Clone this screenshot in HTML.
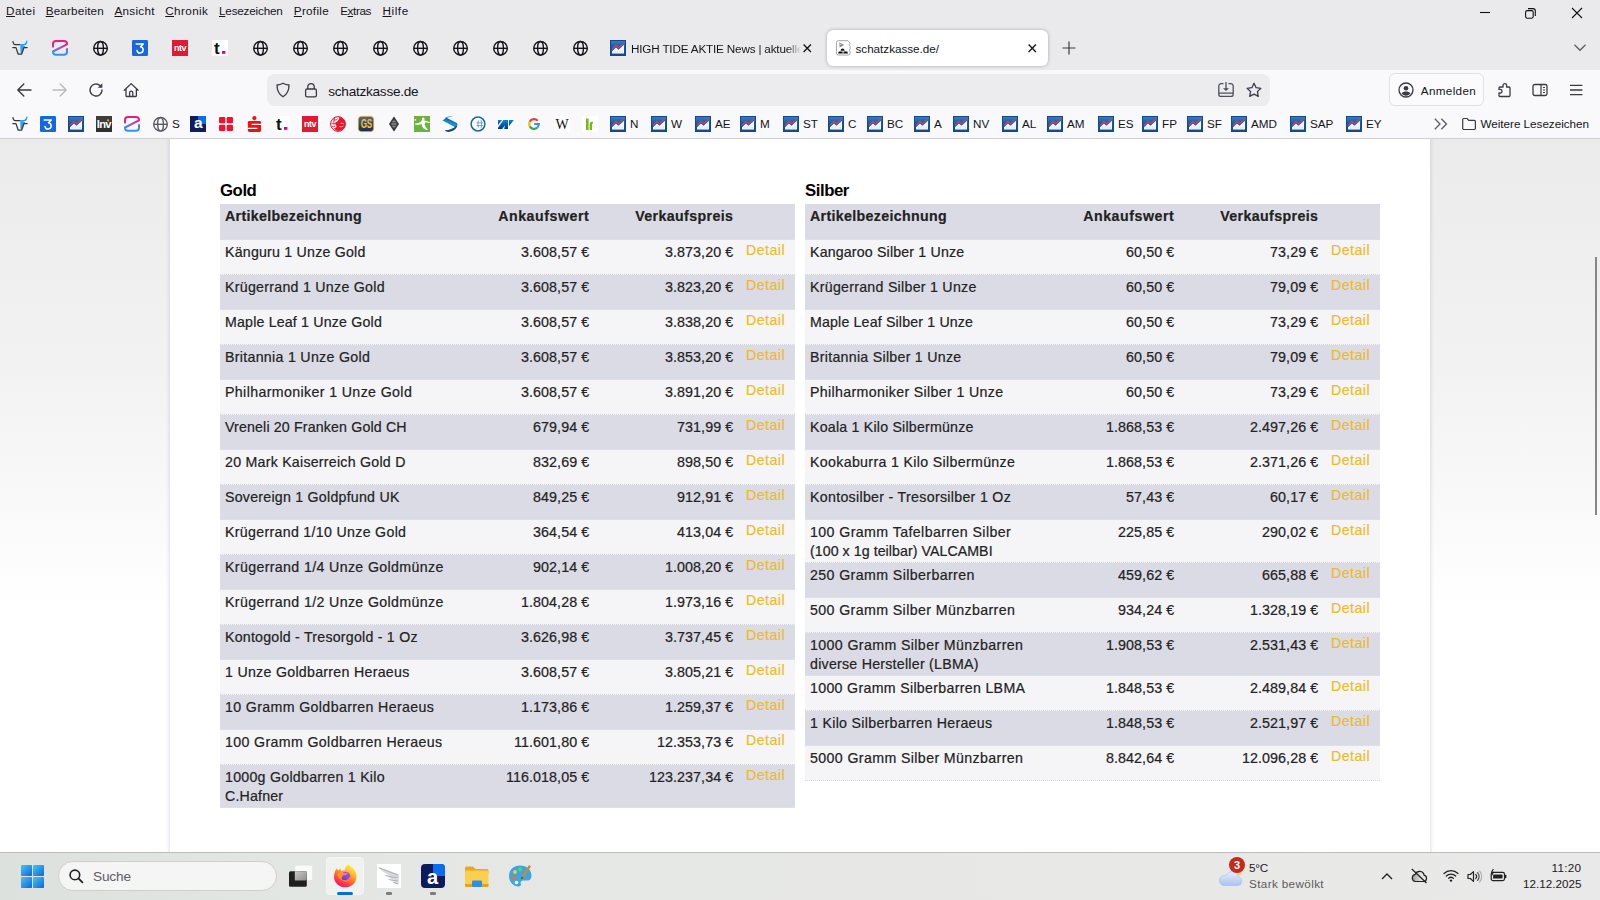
<!DOCTYPE html>
<html lang="de"><head><meta charset="utf-8"><title>schatzkasse.de/</title>
<style>
*{box-sizing:border-box;margin:0;padding:0}
html,body{width:1600px;height:900px;overflow:hidden;background:#fff}
body{position:relative;font-family:"Liberation Sans",sans-serif;color:#15141a}
.abs{position:absolute}
svg{position:absolute;overflow:visible}

#titlebar{position:absolute;left:0;top:0;width:1600px;height:70px;background:#eaeaed}
#navbar{position:absolute;left:0;top:70px;width:1600px;height:69px;background:#f9f9fb;border-bottom:1px solid #cfcfd4}
.ui{font-family:"Liberation Sans",sans-serif;font-size:11.7px;color:#15141a;white-space:nowrap;position:absolute;line-height:16px}
.menu{top:3px}
.menu u{text-decoration:underline;text-underline-offset:1px}
#tab{position:absolute;left:827px;top:30px;width:221px;height:36px;background:#fff;border-radius:6px;box-shadow:0 0 3.5px rgba(0,0,0,.3)}
#urlbar{position:absolute;left:267px;top:74px;width:1003px;height:32px;background:#ececef;border-radius:8px}
#signin{position:absolute;left:1389px;top:73px;width:95px;height:33px;border:1px solid #e0e0e6;border-radius:6px;background:#fbfbfd}
.bm{top:116px}
#taskbar{position:absolute;left:0;top:852px;width:1600px;height:48px;background:linear-gradient(90deg,#dce1dd 0,#e2e6e2 15%,#e6e8e5 38%,#e8e8e7 70%,#e9e9e9 100%);box-shadow:inset 0 1px 0 #bbbdbc}
#search{position:absolute;left:57.5px;top:9px;width:219px;height:30px;border-radius:15px;background:#f5f5f5;border:1px solid #cdcfcd}
.tb{font-family:"Liberation Sans",sans-serif;position:absolute;white-space:nowrap;color:#1b1b1b;font-size:12px;line-height:16px}

/* page */
#view{position:absolute;left:0;top:139px;width:1600px;height:713px;background:linear-gradient(#ebebeb 0,#f3f3f3 250px,#fff 470px);overflow:hidden}
#page{position:absolute;left:170px;top:-20px;width:1260px;height:760px;background:#fff;box-shadow:0 0 4px rgba(130,130,165,.38)}
#content{position:absolute;left:0;top:-139px;width:1600px;height:900px;font-family:"Liberation Sans",sans-serif;font-size:14.2px;color:#222;-webkit-text-stroke:.2px #222}
.h2{position:absolute;font-weight:bold;font-size:16.8px;line-height:22px;color:#000;white-space:nowrap;letter-spacing:-.45px;-webkit-text-stroke:0}
.row{position:absolute;width:575px;border-bottom:1px dotted #d6d6e1}
.row.dk{background:#dbdbe5;border-bottom-color:#e2e2eb}
.row.lt{background:#f5f5f8}
.row span,.row a{position:absolute;top:3px;line-height:19px;white-space:nowrap}
.l2{top:22px !important}
.n{font-size:14.3px;letter-spacing:.08px}
.c1{left:5px}
.c2{right:205.7px;text-align:right}
.c3{right:61.7px;text-align:right}
.c4{left:526px;top:1px !important;color:#ecbc2c;-webkit-text-stroke:.2px #ecbc2c}
.b{font-weight:bold}
#sb{position:absolute;left:1595px;top:257px;width:2px;height:258px;background:#868688}
</style></head>
<body>
<div id="titlebar"></div><div id="navbar"></div>
<span class="ui menu" style="left:6.1px;letter-spacing:0.397px"><u>D</u>atei</span>
<span class="ui menu" style="left:45.7px;letter-spacing:0.173px"><u>B</u>earbeiten</span>
<span class="ui menu" style="left:114.5px;letter-spacing:0.259px"><u>A</u>nsicht</span>
<span class="ui menu" style="left:165.2px;letter-spacing:0.417px"><u>C</u>hronik</span>
<span class="ui menu" style="left:219.0px;letter-spacing:-0.186px"><u>L</u>esezeichen</span>
<span class="ui menu" style="left:293.8px;letter-spacing:0.293px"><u>P</u>rofile</span>
<span class="ui menu" style="left:340.2px;letter-spacing:-0.385px">E<u>x</u>tras</span>
<span class="ui menu" style="left:382.5px;letter-spacing:0.573px"><u>H</u>ilfe</span>
<svg style="left:1480px;top:8px" width="10" height="10" viewBox="0 0 10 10" ><path d="M0 4.500h10" stroke="#111" stroke-width="1.100"/></svg>
<svg style="left:1525px;top:8px" width="11" height="11" viewBox="0 0 11 11" ><rect x=".6" y="2.600" width="7.600" height="7.600" rx="1.600" fill="none" stroke="#111" stroke-width="1.100"/><path d="M3 .6h5a2.300 2.300 0 0 1 2.300 2.300v5" fill="none" stroke="#111" stroke-width="1.100"/></svg>
<svg style="left:1572px;top:8px" width="10" height="10" viewBox="0 0 10 10" ><path d="M0 0l10 10M10 0L0 10" stroke="#111" stroke-width="1.100"/></svg>
<svg style="left:12px;top:40px" width="16" height="16" viewBox="0 0 16 16" ><path d="M.9 1.500C1.200 3.400 1.900 4.600 3.200 4.600H8.500" fill="none" stroke="#33373c" stroke-width="1.250" stroke-linecap="round"/><path d="M8.300 4.600H12.400C13.700 4.600 14.500 3.200 14.900 1.200" fill="none" stroke="#2a9df4" stroke-width="1.250" stroke-linecap="round"/><path d="M12 4.500l2.800-3.100-.7 3.100z" fill="#2a9df4"/><path d="M8.300 5.200h3.400l1.900 2-1.900.6-2.100 5.200H8.500z" fill="#2a9df4"/><path d="M.8 7.600H4L6.100 14H9.700L12 7.600H15.200" fill="none" stroke="#33373c" stroke-width="1.250" stroke-linejoin="round" stroke-linecap="round"/></svg>
<svg style="left:52px;top:40px" width="16" height="16" viewBox="0 0 16 16" ><defs><linearGradient id="zg1" x1="0" y1="0" x2="0" y2="1"><stop offset="0" stop-color="#ee1a78"/><stop offset=".25" stop-color="#e8207f"/><stop offset=".55" stop-color="#8a5fd0"/><stop offset=".8" stop-color="#3391f2"/><stop offset="1" stop-color="#2b95f5"/></linearGradient></defs><path d="M1 7.400V4a3 3 0 0 1 3-3h8a3 3 0 0 1 3 3v.3L1 11.500V11.800a3 3 0 0 0 3 3h8a3 3 0 0 0 3-3V8.300" fill="none" stroke="url(#zg1)" stroke-width="2" stroke-linecap="butt" stroke-linejoin="round"/></svg>
<svg style="left:92px;top:40px" width="16" height="16" viewBox="0 0 16 16" ><g fill="none" stroke="#15141a" stroke-width="1.4"><circle cx="8.5" cy="8.3" r="6.8"/><ellipse cx="8.5" cy="8.3" rx="2.9" ry="6.8"/><path d="M1.7 8.3h13.600"/></g></svg>
<svg style="left:132px;top:40px" width="16" height="16" viewBox="0 0 16 16" ><rect width="16" height="16" rx="1.300" fill="#1667e0"/><path d="M4.200 4H11.300L8.500 6.800A3.100 3.100 0 1 1 5 10.500" fill="none" stroke="#fff" stroke-width="1.500" stroke-linecap="round" stroke-linejoin="round"/></svg>
<svg style="left:172px;top:40px" width="16" height="16" viewBox="0 0 16 16" ><rect width="16" height="16" fill="#e01a35"/><text x="8" y="10.800" text-anchor="middle" font-family="Liberation Sans,sans-serif" font-weight="bold" font-size="9" fill="#fff" letter-spacing="-.55">ntv</text></svg>
<svg style="left:212px;top:40px" width="16" height="16" viewBox="0 0 16 16" ><rect width="16" height="16" fill="#fff"/><text x="2.100" y="13.800" font-family="Liberation Sans,sans-serif" font-weight="bold" font-size="17" fill="#111">t</text><rect x="10" y="11" width="3.400" height="2.800" fill="#e2007a"/></svg>
<svg style="left:252px;top:40px" width="16" height="16" viewBox="0 0 16 16" ><g fill="none" stroke="#15141a" stroke-width="1.4"><circle cx="8.5" cy="8.3" r="6.8"/><ellipse cx="8.5" cy="8.3" rx="2.9" ry="6.8"/><path d="M1.7 8.3h13.600"/></g></svg>
<svg style="left:292px;top:40px" width="16" height="16" viewBox="0 0 16 16" ><g fill="none" stroke="#15141a" stroke-width="1.4"><circle cx="8.5" cy="8.3" r="6.8"/><ellipse cx="8.5" cy="8.3" rx="2.9" ry="6.8"/><path d="M1.7 8.3h13.600"/></g></svg>
<svg style="left:332px;top:40px" width="16" height="16" viewBox="0 0 16 16" ><g fill="none" stroke="#15141a" stroke-width="1.4"><circle cx="8.5" cy="8.3" r="6.8"/><ellipse cx="8.5" cy="8.3" rx="2.9" ry="6.8"/><path d="M1.7 8.3h13.600"/></g></svg>
<svg style="left:372px;top:40px" width="16" height="16" viewBox="0 0 16 16" ><g fill="none" stroke="#15141a" stroke-width="1.4"><circle cx="8.5" cy="8.3" r="6.8"/><ellipse cx="8.5" cy="8.3" rx="2.9" ry="6.8"/><path d="M1.7 8.3h13.600"/></g></svg>
<svg style="left:412px;top:40px" width="16" height="16" viewBox="0 0 16 16" ><g fill="none" stroke="#15141a" stroke-width="1.4"><circle cx="8.5" cy="8.3" r="6.8"/><ellipse cx="8.5" cy="8.3" rx="2.9" ry="6.8"/><path d="M1.7 8.3h13.600"/></g></svg>
<svg style="left:452px;top:40px" width="16" height="16" viewBox="0 0 16 16" ><g fill="none" stroke="#15141a" stroke-width="1.4"><circle cx="8.5" cy="8.3" r="6.8"/><ellipse cx="8.5" cy="8.3" rx="2.9" ry="6.8"/><path d="M1.7 8.3h13.600"/></g></svg>
<svg style="left:492px;top:40px" width="16" height="16" viewBox="0 0 16 16" ><g fill="none" stroke="#15141a" stroke-width="1.4"><circle cx="8.5" cy="8.3" r="6.8"/><ellipse cx="8.5" cy="8.3" rx="2.9" ry="6.8"/><path d="M1.7 8.3h13.600"/></g></svg>
<svg style="left:532px;top:40px" width="16" height="16" viewBox="0 0 16 16" ><g fill="none" stroke="#15141a" stroke-width="1.4"><circle cx="8.5" cy="8.3" r="6.8"/><ellipse cx="8.5" cy="8.3" rx="2.9" ry="6.8"/><path d="M1.7 8.3h13.600"/></g></svg>
<svg style="left:572px;top:40px" width="16" height="16" viewBox="0 0 16 16" ><g fill="none" stroke="#15141a" stroke-width="1.4"><circle cx="8.5" cy="8.3" r="6.8"/><ellipse cx="8.5" cy="8.3" rx="2.9" ry="6.8"/><path d="M1.7 8.3h13.600"/></g></svg>
<svg style="left:610px;top:40px" width="16" height="16" viewBox="0 0 16 16" ><defs><linearGradient id="cg1" x1="0" y1="0" x2="0" y2="1"><stop offset="0" stop-color="#3f7fc6"/><stop offset=".45" stop-color="#1a5aa6"/><stop offset="1" stop-color="#0c4a90"/></linearGradient></defs><rect width="16" height="16" fill="url(#cg1)"/><rect x=".5" y=".5" width="15" height="15" fill="none" stroke="#0d4b92" stroke-width="1"/><path d="M2 13.400V11.300L6 7.500 8.500 9.800 14 4.800V13.400z" fill="#f6f6f6"/><path d="M4.800 10.500v2.900M7.300 10.500v2.900M10 10.500v2.900M12.300 10.500v2.900" stroke="#dcdcdc" stroke-width=".9"/><path d="M2 9.200L6 5.400 8.500 7.600 14 2.600" fill="none" stroke="#d8404f" stroke-width="1.250"/></svg>
<div class="abs" style="left:631px;top:41px;width:170px;height:16px;overflow:hidden;-webkit-mask-image:linear-gradient(90deg,#000 156px,transparent 170px);mask-image:linear-gradient(90deg,#000 156px,transparent 170px)"><span class="ui" style="left:0;top:0;letter-spacing:-0.170px">HIGH TIDE AKTIE News | aktuelle Nachrichten</span></div>
<svg style="left:803px;top:44px" width="8.5" height="8.5" viewBox="0 0 8.5 8.5" ><path d="M.6 .6l7.300 7.300M7.900 .6l-7.300 7.300" stroke="#15141a" stroke-width="1.350"/></svg>
<div id="tab"></div>
<svg style="left:836px;top:40px" width="16" height="16" viewBox="0 0 16 16" ><path d="M2.200 .5H12l2.300 2.500-.9 1.700.9 1.600v2.500l-.9 1.500.9 1.700v1.300a2 2 0 0 1-2 2H2.200a2 2 0 0 1-2-2V2.500a2 2 0 0 1 2-2z" transform="translate(.3 .2) scale(.97)" fill="#fff" stroke="#a3a3a8" stroke-width="1"/><path d="M3.300 2.200L8.200 5 3.600 7.600z" fill="#8c8c90"/><path d="M4.700 5L3.900 3.600" stroke="#fff" stroke-width=".6"/><path d="M4.600 10.800c.3-1.500 1-2.200 2-2.200s1.800.7 2.100 2.200z" fill="#111"/><path d="M2 13.500l.8-2h3.600l.4 2zM7.300 13.500l.3-2h3.600l.9 2z" fill="#111"/></svg>
<span class="ui" style="left:855.5px;top:41px;letter-spacing:-0.022px">schatzkasse.de/</span>
<svg style="left:1028px;top:44px" width="8.5" height="8.5" viewBox="0 0 8.5 8.5" ><path d="M.6 .6l7.300 7.300M7.900 .6l-7.300 7.300" stroke="#15141a" stroke-width="1.350"/></svg>
<svg style="left:1062px;top:41px" width="14" height="14" viewBox="0 0 14 14" ><path d="M7 .5v13M.5 7h13" stroke="#3a3944" stroke-width="1.200"/></svg>
<svg style="left:1574px;top:44px" width="12" height="8" viewBox="0 0 12 8" ><path d="M.5 .8l5.500 5.500L11.500 .8" fill="none" stroke="#5b5b66" stroke-width="1.300"/></svg>
<svg style="left:16px;top:82px" width="16" height="16" viewBox="0 0 16 16" ><path d="M15 8H2M7.800 2L1.800 8l6 6" fill="none" stroke="#3a3944" stroke-width="1.400" stroke-linecap="round" stroke-linejoin="round"/></svg>
<svg style="left:52px;top:82px" width="16" height="16" viewBox="0 0 16 16" ><path d="M1 8h13M8.200 2l6 6-6 6" fill="none" stroke="#b9b9c0" stroke-width="1.400" stroke-linecap="round" stroke-linejoin="round"/></svg>
<svg style="left:88px;top:82px" width="16" height="16" viewBox="0 0 16 16" ><path d="M14 8a6 6 0 1 1-2.200-4.600" fill="none" stroke="#3a3944" stroke-width="1.400" stroke-linecap="round"/><path d="M14.300 1.300v4.500H9.800z" fill="#3a3944"/></svg>
<svg style="left:123px;top:82px" width="16" height="16" viewBox="0 0 16 16" ><path d="M1.300 8.200L8.200 1.600 15.100 8.200M3 6.800V13.800a.7.7 0 0 0 .7.700H12.700a.7.7 0 0 0 .7-.7V6.800M6.600 14.400V10.700a1.600 1.600 0 0 1 3.200 0V14.400" fill="none" stroke="#3a3944" stroke-width="1.300" stroke-linejoin="round" stroke-linecap="round"/></svg>
<div id="urlbar"></div>
<svg style="left:275px;top:82px" width="16" height="16" viewBox="0 0 16 16" ><path d="M8 1.200c2 1.200 4 1.700 6 1.800 0 5.500-1.800 9.300-6 11.800C3.800 12.300 2 8.500 2 3 4 2.900 6 2.400 8 1.200z" fill="none" stroke="#3a3944" stroke-width="1.300" stroke-linejoin="round"/></svg>
<svg style="left:303px;top:82px" width="16" height="16" viewBox="0 0 16 16" ><rect x="2.600" y="7" width="10.800" height="7.800" rx="1.600" fill="none" stroke="#3a3944" stroke-width="1.300"/><path d="M4.800 7V4.800a3.200 3.200 0 0 1 6.400 0V7" fill="none" stroke="#3a3944" stroke-width="1.300"/></svg>
<span class="ui" style="left:328.3px;top:83px;font-size:13.600px;line-height:18px;letter-spacing:-0.262px">schatzkasse.de</span>
<svg style="left:1218px;top:82px" width="16" height="16" viewBox="0 0 16 16" ><path d="M5.500 1.700H3A2.200 2.200 0 0 0 .8 3.900v8.300A2.200 2.200 0 0 0 3 14.400h10a2.200 2.200 0 0 0 2.200-2.200V3.900A2.200 2.200 0 0 0 13 1.700h-2.500M.8 11.200H15.200M8 0V7" fill="none" stroke="#4f4f5a" stroke-width="1.300"/><path d="M4.900 6.200h6.200L8 9z" fill="#4f4f5a"/></svg>
<svg style="left:1246px;top:82px" width="16" height="16" viewBox="0 0 16 16" ><path d="M8 1.300l2.100 4.400 4.800.6-3.500 3.300.9 4.800L8 12.100l-4.300 2.300.9-4.800L1.100 6.300l4.800-.6z" fill="none" stroke="#3a3944" stroke-width="1.300" stroke-linejoin="round"/></svg>
<div id="signin"></div>
<svg style="left:1398px;top:82px" width="16" height="16" viewBox="0 0 16 16" ><circle cx="8" cy="8" r="7" fill="none" stroke="#3a3944" stroke-width="1.300"/><circle cx="8" cy="6.300" r="2.300" fill="#3a3944"/><path d="M3.600 11.200c1-1.300 2.500-1.800 4.400-1.800s3.400.5 4.400 1.800c-1 1.600-2.500 2.500-4.400 2.500s-3.400-.9-4.400-2.500z" fill="#3a3944"/></svg>
<span class="ui" style="left:1420.8px;top:82px;line-height:17px;letter-spacing:0.337px">Anmelden</span>
<svg style="left:1497px;top:82px" width="16" height="16" viewBox="0 0 16 16" ><path d="M6 3.500a1.800 1.800 0 0 1 3.600 0V5H12a1 1 0 0 1 1 1v7.500a1 1 0 0 1-1 1H3a1 1 0 0 1-1-1V11h1.200a1.800 1.800 0 0 0 0-3.600H2V6a1 1 0 0 1 1-1h3z" fill="none" stroke="#3a3944" stroke-width="1.300" stroke-linejoin="round"/></svg>
<svg style="left:1532px;top:82px" width="16" height="16" viewBox="0 0 16 16" ><rect x="1" y="2.500" width="14" height="11" rx="1.800" fill="none" stroke="#3a3944" stroke-width="1.300"/><path d="M9 2.500v11M11 5.500h2M11 8h2M11 10.500h2" stroke="#3a3944" stroke-width="1.200"/></svg>
<svg style="left:1569px;top:82px" width="16" height="16" viewBox="0 0 16 16" ><path d="M1 3.400h12.400M1 8h12.400M1 12.600h12.400" stroke="#3a3944" stroke-width="1.300"/></svg>
<svg style="left:12px;top:116px" width="16" height="16" viewBox="0 0 16 16" ><path d="M.9 1.500C1.200 3.400 1.900 4.600 3.200 4.600H8.500" fill="none" stroke="#33373c" stroke-width="1.250" stroke-linecap="round"/><path d="M8.300 4.600H12.400C13.700 4.600 14.500 3.200 14.900 1.200" fill="none" stroke="#2a9df4" stroke-width="1.250" stroke-linecap="round"/><path d="M12 4.500l2.800-3.100-.7 3.100z" fill="#2a9df4"/><path d="M8.300 5.200h3.400l1.900 2-1.900.6-2.100 5.200H8.500z" fill="#2a9df4"/><path d="M.8 7.600H4L6.100 14H9.700L12 7.600H15.200" fill="none" stroke="#33373c" stroke-width="1.250" stroke-linejoin="round" stroke-linecap="round"/></svg>
<svg style="left:40px;top:116px" width="16" height="16" viewBox="0 0 16 16" ><rect width="16" height="16" rx="1.300" fill="#1667e0"/><path d="M4.200 4H11.300L8.500 6.800A3.100 3.100 0 1 1 5 10.500" fill="none" stroke="#fff" stroke-width="1.500" stroke-linecap="round" stroke-linejoin="round"/></svg>
<svg style="left:68px;top:116px" width="16" height="16" viewBox="0 0 16 16" ><defs><linearGradient id="cg2" x1="0" y1="0" x2="0" y2="1"><stop offset="0" stop-color="#3f7fc6"/><stop offset=".45" stop-color="#1a5aa6"/><stop offset="1" stop-color="#0c4a90"/></linearGradient></defs><rect width="16" height="16" fill="url(#cg2)"/><rect x=".5" y=".5" width="15" height="15" fill="none" stroke="#0d4b92" stroke-width="1"/><path d="M2 13.400V11.300L6 7.500 8.500 9.800 14 4.800V13.400z" fill="#f6f6f6"/><path d="M4.800 10.500v2.900M7.300 10.500v2.900M10 10.500v2.900M12.300 10.500v2.900" stroke="#dcdcdc" stroke-width=".9"/><path d="M2 9.200L6 5.400 8.500 7.600 14 2.600" fill="none" stroke="#d8404f" stroke-width="1.250"/></svg>
<svg style="left:96px;top:116px" width="16" height="16" viewBox="0 0 16 16" ><rect width="16" height="16" fill="#303030"/><rect width="16" height="7" fill="#3d3d3d"/><text x="7.800" y="11.700" text-anchor="middle" font-family="Liberation Sans,sans-serif" font-weight="bold" font-size="11.200" fill="#fff" letter-spacing="-.75">Inv</text><circle cx="12.100" cy="4.300" r="1.100" fill="#ffa31a"/></svg>
<svg style="left:124px;top:116px" width="16" height="16" viewBox="0 0 16 16" ><defs><linearGradient id="zg2" x1="0" y1="0" x2="0" y2="1"><stop offset="0" stop-color="#ee1a78"/><stop offset=".25" stop-color="#e8207f"/><stop offset=".55" stop-color="#8a5fd0"/><stop offset=".8" stop-color="#3391f2"/><stop offset="1" stop-color="#2b95f5"/></linearGradient></defs><path d="M1 7.400V4a3 3 0 0 1 3-3h8a3 3 0 0 1 3 3v.3L1 11.500V11.800a3 3 0 0 0 3 3h8a3 3 0 0 0 3-3V8.300" fill="none" stroke="url(#zg2)" stroke-width="2" stroke-linecap="butt" stroke-linejoin="round"/></svg>
<svg style="left:152px;top:116px" width="16" height="16" viewBox="0 0 16 16" ><g fill="none" stroke="#5b5b66" stroke-width="1.4"><circle cx="8.5" cy="8.3" r="6.8"/><ellipse cx="8.5" cy="8.3" rx="2.9" ry="6.8"/><path d="M1.7 8.3h13.600"/></g></svg>
<span class="ui bm" style="left:172px">S</span>
<svg style="left:190px;top:116px" width="16" height="16" viewBox="0 0 16 16" ><rect width="16" height="16" fill="#101c5c"/><rect x="8" y="0" width="8" height="8" fill="#0a6cf0"/><text x="8.200" y="12" text-anchor="middle" font-family="Liberation Sans,sans-serif" font-weight="bold" font-size="15.500" fill="#fff">a</text></svg>
<svg style="left:218px;top:116px" width="16" height="16" viewBox="0 0 16 16" ><g fill="#f5102e"><rect x="1" y="1" width="6.300" height="6.300" rx="1.200"/><rect x="8.700" y="1" width="6.300" height="6.300" rx="1.200"/><rect x="1" y="8.700" width="6.300" height="6.300" rx="1.200"/><rect x="8.700" y="8.700" width="6.300" height="6.300" rx="1.200"/></g></svg>
<svg style="left:246px;top:116px" width="16" height="16" viewBox="0 0 16 16" ><g fill="#f50f0f"><circle cx="8.400" cy="2.100" r="2.100"/><rect x="1.900" y="4.900" width="13.100" height="11" rx="1.300"/></g><path d="M5.600 8.300H15.200M1.700 12.400H11.400" stroke="#f9f9fb" stroke-width="1.200"/></svg>
<svg style="left:274px;top:116px" width="16" height="16" viewBox="0 0 16 16" ><rect width="16" height="16" fill="#fff"/><text x="2.100" y="13.800" font-family="Liberation Sans,sans-serif" font-weight="bold" font-size="17" fill="#111">t</text><rect x="10" y="11" width="3.400" height="2.800" fill="#e2007a"/></svg>
<svg style="left:302px;top:116px" width="16" height="16" viewBox="0 0 16 16" ><rect width="16" height="16" fill="#e01a35"/><text x="8" y="10.800" text-anchor="middle" font-family="Liberation Sans,sans-serif" font-weight="bold" font-size="9" fill="#fff" letter-spacing="-.55">ntv</text></svg>
<svg style="left:330px;top:116px" width="16" height="16" viewBox="0 0 16 16" ><circle cx="8" cy="8" r="7.400" fill="#fbeaec" stroke="#e8172c" stroke-width="1"/><path d="M9 1c3.500.3 6.400 3.200 6.400 7s-3 6.800-6.800 7c-2.200-.2-3.800-1.300-4.800-2.800 1.200.3 2.300-.2 2.600-1.300.3-1.300-.9-2-1.100-3.200-.2-1.400 1.300-1.800 2.500-2.800C9 3.800 9.500 2.300 9 1z" fill="#e8172c"/><g stroke="#e8172c" stroke-width=".8" fill="none"><path d="M3 3.800c1.500.5 3 .3 4.500-.8M1.500 7c1.500 1 3 .8 4.500.2M2 10.500c1 .3 2 .2 3-.3M5 1.600C3.800 3.500 3.600 6 4.200 8.500"/></g><path d="M10.500 7.500c1.200-.5 2.500-.3 3.300.4M9.500 10.500c1.300.5 2.800.3 4-.5" stroke="#fbeaec" stroke-width=".7" fill="none"/></svg>
<svg style="left:358px;top:116px" width="16" height="16" viewBox="0 0 16 16" ><defs><linearGradient id="gsg" x1="0" y1="0" x2="0" y2="1"><stop offset="0" stop-color="#56669a"/><stop offset="1" stop-color="#1c2752"/></linearGradient></defs><rect x=".4" y=".4" width="15.200" height="15.200" rx="3" fill="url(#gsg)" stroke="#e0aa18" stroke-width=".8"/><text x="0" y="0" transform="translate(8.300 12.100) scale(.64 1)" text-anchor="middle" font-family="Liberation Sans,sans-serif" font-weight="bold" font-size="12.400" fill="#f7c81a" letter-spacing="-.2">GS</text></svg>
<svg style="left:386px;top:116px" width="16" height="16" viewBox="0 0 16 16" ><path d="M8 .9l4.600 7.100L8 15.100 3.400 8z" fill="#2f2f2f"/><path d="M8 3l3.200 5L8 13 4.800 8z" fill="#555"/><path d="M6.300 5.300h3.400M5.300 8h5.400M6.300 10.700h3.400" stroke="#9a9a9a" stroke-width=".9"/><path d="M8 .9l4.600 7.100L8 15.100 3.400 8z" fill="none" stroke="#222" stroke-width=".6"/></svg>
<svg style="left:414px;top:116px" width="16" height="16" viewBox="0 0 16 16" ><rect width="16" height="16" fill="#6cb33e"/><g fill="#fff"><circle cx="9.300" cy="2.900" r="1.300"/><circle cx="1.300" cy="3.900" r=".8"/><path d="M7.800 4.200c1-.5 2.300-.4 3 .2l4.900 1.600-.2.900-4.300-.7-.6 2.600 1.300 2.500 1.800 2.200-.7.700-3.600-2-1.500-2.200-.3-1.900-3.300.8-3.300-.4.100-1 3.200-.4 2.200-1.200z"/></g></svg>
<svg style="left:442px;top:116px" width="16" height="16" viewBox="0 0 16 16" ><defs><linearGradient id="swg" x1="0" y1="1" x2=".5" y2="0"><stop offset=".1" stop-color="#0b4478"/><stop offset=".55" stop-color="#1c96dc"/><stop offset=".95" stop-color="#0d5590"/></linearGradient></defs><path d="M2.600 2.200C5 .6 8.500.1 11 .5 8 .8 5.600 1.500 3.400 2.800z" fill="#2aa9f5"/><path d="M.4 4.400L4.500 1.800 15.300 7.200C15.600 8.800 15 10.500 13.800 11.600z" fill="url(#swg)"/><path d="M15.200 9.300C14.800 13.500 9.500 16.400 5.200 15.800 4 15.500 3.200 14.900 2.900 14.200 7 14.300 11.500 12.500 14.200 10z" fill="#0b4778"/></svg>
<svg style="left:470px;top:116px" width="16" height="16" viewBox="0 0 16 16" ><circle cx="8" cy="8" r="6.900" fill="#fdfdfd" stroke="#1d6a99" stroke-width="1.500"/><g stroke="#3f8fbd" stroke-width=".8" fill="none" opacity=".9"><path d="M8.500 4.500c-.8 2.300-.8 4.700 0 7M11 4c.8 2.700.8 5.300 0 8M6.500 6.800h6.500M6.500 9.600h6.500"/></g></svg>
<svg style="left:498px;top:116px" width="16" height="16" viewBox="0 0 16 16" ><defs><linearGradient id="nbg" x1="0" y1="0" x2="0" y2="1"><stop offset="0" stop-color="#0a86d8"/><stop offset="1" stop-color="#003a8c"/></linearGradient></defs><g fill="url(#nbg)"><path d="M0 3.900H4.100L0 9.100z"/><path d="M5.400 3.900H10V12.900H6.200L6.900 9.300 4.200 12.900H0V11.800z"/><path d="M11 3.900H15.900L11 9.900z"/></g></svg>
<svg style="left:526px;top:116px" width="16" height="16" viewBox="0 0 16 16" ><circle cx="8" cy="8" r="7.700" fill="#fff"/><g fill="none" stroke-width="2.300"><path d="M11.700 4.850A4.850 4.850 0 0 0 3.700 5.750" stroke="#ea4335"/><path d="M3.700 5.750A4.850 4.850 0 0 0 3.700 10.250" stroke="#fbbc05"/><path d="M3.700 10.250A4.850 4.850 0 0 0 11.400 11.500" stroke="#34a853"/><path d="M11.400 11.500A4.850 4.850 0 0 0 12.850 8.100H8.200" stroke="#4285f4" stroke-width="2"/></g></svg>
<svg style="left:554px;top:116px" width="16" height="16" viewBox="0 0 16 16" ><rect width="16" height="16" rx="2" fill="#fff"/><text x="8" y="13" text-anchor="middle" font-family="Liberation Serif,serif" font-size="14" fill="#111">W</text></svg>
<svg style="left:582px;top:116px" width="16" height="16" viewBox="0 0 16 16" ><rect width="16" height="16" fill="#fff"/><g fill="#79b51c"><rect x="4" y="2.500" width="2.600" height="11.500"/><path d="M7.600 14V8.300c0-1.800 1.200-2.900 3.200-2.900v2.300c-.5 0-.8.300-.8.900V14z"/></g></svg>
<svg style="left:610px;top:116px" width="16" height="16" viewBox="0 0 16 16" ><defs><linearGradient id="cg3" x1="0" y1="0" x2="0" y2="1"><stop offset="0" stop-color="#3f7fc6"/><stop offset=".45" stop-color="#1a5aa6"/><stop offset="1" stop-color="#0c4a90"/></linearGradient></defs><rect width="16" height="16" fill="url(#cg3)"/><rect x=".5" y=".5" width="15" height="15" fill="none" stroke="#0d4b92" stroke-width="1"/><path d="M2 13.400V11.300L6 7.500 8.500 9.800 14 4.800V13.400z" fill="#f6f6f6"/><path d="M4.800 10.500v2.900M7.300 10.500v2.900M10 10.500v2.900M12.300 10.500v2.900" stroke="#dcdcdc" stroke-width=".9"/><path d="M2 9.200L6 5.400 8.500 7.600 14 2.600" fill="none" stroke="#d8404f" stroke-width="1.250"/></svg>
<span class="ui bm" style="left:630px">N</span>
<svg style="left:651px;top:116px" width="16" height="16" viewBox="0 0 16 16" ><defs><linearGradient id="cg4" x1="0" y1="0" x2="0" y2="1"><stop offset="0" stop-color="#3f7fc6"/><stop offset=".45" stop-color="#1a5aa6"/><stop offset="1" stop-color="#0c4a90"/></linearGradient></defs><rect width="16" height="16" fill="url(#cg4)"/><rect x=".5" y=".5" width="15" height="15" fill="none" stroke="#0d4b92" stroke-width="1"/><path d="M2 13.400V11.300L6 7.500 8.500 9.800 14 4.800V13.400z" fill="#f6f6f6"/><path d="M4.800 10.500v2.900M7.300 10.500v2.900M10 10.500v2.900M12.300 10.500v2.900" stroke="#dcdcdc" stroke-width=".9"/><path d="M2 9.200L6 5.400 8.500 7.600 14 2.600" fill="none" stroke="#d8404f" stroke-width="1.250"/></svg>
<span class="ui bm" style="left:671px">W</span>
<svg style="left:695px;top:116px" width="16" height="16" viewBox="0 0 16 16" ><defs><linearGradient id="cg5" x1="0" y1="0" x2="0" y2="1"><stop offset="0" stop-color="#3f7fc6"/><stop offset=".45" stop-color="#1a5aa6"/><stop offset="1" stop-color="#0c4a90"/></linearGradient></defs><rect width="16" height="16" fill="url(#cg5)"/><rect x=".5" y=".5" width="15" height="15" fill="none" stroke="#0d4b92" stroke-width="1"/><path d="M2 13.400V11.300L6 7.500 8.500 9.800 14 4.800V13.400z" fill="#f6f6f6"/><path d="M4.800 10.500v2.900M7.300 10.500v2.900M10 10.500v2.900M12.300 10.500v2.900" stroke="#dcdcdc" stroke-width=".9"/><path d="M2 9.200L6 5.400 8.500 7.600 14 2.600" fill="none" stroke="#d8404f" stroke-width="1.250"/></svg>
<span class="ui bm" style="left:715px">AE</span>
<svg style="left:740px;top:116px" width="16" height="16" viewBox="0 0 16 16" ><defs><linearGradient id="cg6" x1="0" y1="0" x2="0" y2="1"><stop offset="0" stop-color="#3f7fc6"/><stop offset=".45" stop-color="#1a5aa6"/><stop offset="1" stop-color="#0c4a90"/></linearGradient></defs><rect width="16" height="16" fill="url(#cg6)"/><rect x=".5" y=".5" width="15" height="15" fill="none" stroke="#0d4b92" stroke-width="1"/><path d="M2 13.400V11.300L6 7.500 8.500 9.800 14 4.800V13.400z" fill="#f6f6f6"/><path d="M4.800 10.500v2.900M7.300 10.500v2.900M10 10.500v2.900M12.300 10.500v2.900" stroke="#dcdcdc" stroke-width=".9"/><path d="M2 9.200L6 5.400 8.500 7.600 14 2.600" fill="none" stroke="#d8404f" stroke-width="1.250"/></svg>
<span class="ui bm" style="left:760px">M</span>
<svg style="left:783px;top:116px" width="16" height="16" viewBox="0 0 16 16" ><defs><linearGradient id="cg7" x1="0" y1="0" x2="0" y2="1"><stop offset="0" stop-color="#3f7fc6"/><stop offset=".45" stop-color="#1a5aa6"/><stop offset="1" stop-color="#0c4a90"/></linearGradient></defs><rect width="16" height="16" fill="url(#cg7)"/><rect x=".5" y=".5" width="15" height="15" fill="none" stroke="#0d4b92" stroke-width="1"/><path d="M2 13.400V11.300L6 7.500 8.500 9.800 14 4.800V13.400z" fill="#f6f6f6"/><path d="M4.800 10.500v2.900M7.300 10.500v2.900M10 10.500v2.900M12.300 10.500v2.900" stroke="#dcdcdc" stroke-width=".9"/><path d="M2 9.200L6 5.400 8.500 7.600 14 2.600" fill="none" stroke="#d8404f" stroke-width="1.250"/></svg>
<span class="ui bm" style="left:803px">ST</span>
<svg style="left:828px;top:116px" width="16" height="16" viewBox="0 0 16 16" ><defs><linearGradient id="cg8" x1="0" y1="0" x2="0" y2="1"><stop offset="0" stop-color="#3f7fc6"/><stop offset=".45" stop-color="#1a5aa6"/><stop offset="1" stop-color="#0c4a90"/></linearGradient></defs><rect width="16" height="16" fill="url(#cg8)"/><rect x=".5" y=".5" width="15" height="15" fill="none" stroke="#0d4b92" stroke-width="1"/><path d="M2 13.400V11.300L6 7.500 8.500 9.800 14 4.800V13.400z" fill="#f6f6f6"/><path d="M4.800 10.500v2.900M7.300 10.500v2.900M10 10.500v2.900M12.300 10.500v2.900" stroke="#dcdcdc" stroke-width=".9"/><path d="M2 9.200L6 5.400 8.500 7.600 14 2.600" fill="none" stroke="#d8404f" stroke-width="1.250"/></svg>
<span class="ui bm" style="left:848px">C</span>
<svg style="left:867px;top:116px" width="16" height="16" viewBox="0 0 16 16" ><defs><linearGradient id="cg9" x1="0" y1="0" x2="0" y2="1"><stop offset="0" stop-color="#3f7fc6"/><stop offset=".45" stop-color="#1a5aa6"/><stop offset="1" stop-color="#0c4a90"/></linearGradient></defs><rect width="16" height="16" fill="url(#cg9)"/><rect x=".5" y=".5" width="15" height="15" fill="none" stroke="#0d4b92" stroke-width="1"/><path d="M2 13.400V11.300L6 7.500 8.500 9.800 14 4.800V13.400z" fill="#f6f6f6"/><path d="M4.800 10.500v2.900M7.300 10.500v2.900M10 10.500v2.900M12.300 10.500v2.900" stroke="#dcdcdc" stroke-width=".9"/><path d="M2 9.200L6 5.400 8.500 7.600 14 2.600" fill="none" stroke="#d8404f" stroke-width="1.250"/></svg>
<span class="ui bm" style="left:887px">BC</span>
<svg style="left:914px;top:116px" width="16" height="16" viewBox="0 0 16 16" ><defs><linearGradient id="cg10" x1="0" y1="0" x2="0" y2="1"><stop offset="0" stop-color="#3f7fc6"/><stop offset=".45" stop-color="#1a5aa6"/><stop offset="1" stop-color="#0c4a90"/></linearGradient></defs><rect width="16" height="16" fill="url(#cg10)"/><rect x=".5" y=".5" width="15" height="15" fill="none" stroke="#0d4b92" stroke-width="1"/><path d="M2 13.400V11.300L6 7.500 8.500 9.800 14 4.800V13.400z" fill="#f6f6f6"/><path d="M4.800 10.500v2.900M7.300 10.500v2.900M10 10.500v2.900M12.300 10.500v2.900" stroke="#dcdcdc" stroke-width=".9"/><path d="M2 9.200L6 5.400 8.500 7.600 14 2.600" fill="none" stroke="#d8404f" stroke-width="1.250"/></svg>
<span class="ui bm" style="left:934px">A</span>
<svg style="left:953px;top:116px" width="16" height="16" viewBox="0 0 16 16" ><defs><linearGradient id="cg11" x1="0" y1="0" x2="0" y2="1"><stop offset="0" stop-color="#3f7fc6"/><stop offset=".45" stop-color="#1a5aa6"/><stop offset="1" stop-color="#0c4a90"/></linearGradient></defs><rect width="16" height="16" fill="url(#cg11)"/><rect x=".5" y=".5" width="15" height="15" fill="none" stroke="#0d4b92" stroke-width="1"/><path d="M2 13.400V11.300L6 7.500 8.500 9.800 14 4.800V13.400z" fill="#f6f6f6"/><path d="M4.800 10.500v2.900M7.300 10.500v2.900M10 10.500v2.900M12.300 10.500v2.900" stroke="#dcdcdc" stroke-width=".9"/><path d="M2 9.200L6 5.400 8.500 7.600 14 2.600" fill="none" stroke="#d8404f" stroke-width="1.250"/></svg>
<span class="ui bm" style="left:973px">NV</span>
<svg style="left:1002px;top:116px" width="16" height="16" viewBox="0 0 16 16" ><defs><linearGradient id="cg12" x1="0" y1="0" x2="0" y2="1"><stop offset="0" stop-color="#3f7fc6"/><stop offset=".45" stop-color="#1a5aa6"/><stop offset="1" stop-color="#0c4a90"/></linearGradient></defs><rect width="16" height="16" fill="url(#cg12)"/><rect x=".5" y=".5" width="15" height="15" fill="none" stroke="#0d4b92" stroke-width="1"/><path d="M2 13.400V11.300L6 7.500 8.500 9.800 14 4.800V13.400z" fill="#f6f6f6"/><path d="M4.800 10.500v2.900M7.300 10.500v2.900M10 10.500v2.900M12.300 10.500v2.900" stroke="#dcdcdc" stroke-width=".9"/><path d="M2 9.200L6 5.400 8.500 7.600 14 2.600" fill="none" stroke="#d8404f" stroke-width="1.250"/></svg>
<span class="ui bm" style="left:1022px">AL</span>
<svg style="left:1047px;top:116px" width="16" height="16" viewBox="0 0 16 16" ><defs><linearGradient id="cg13" x1="0" y1="0" x2="0" y2="1"><stop offset="0" stop-color="#3f7fc6"/><stop offset=".45" stop-color="#1a5aa6"/><stop offset="1" stop-color="#0c4a90"/></linearGradient></defs><rect width="16" height="16" fill="url(#cg13)"/><rect x=".5" y=".5" width="15" height="15" fill="none" stroke="#0d4b92" stroke-width="1"/><path d="M2 13.400V11.300L6 7.500 8.500 9.800 14 4.800V13.400z" fill="#f6f6f6"/><path d="M4.800 10.500v2.900M7.300 10.500v2.900M10 10.500v2.900M12.300 10.500v2.900" stroke="#dcdcdc" stroke-width=".9"/><path d="M2 9.200L6 5.400 8.500 7.600 14 2.600" fill="none" stroke="#d8404f" stroke-width="1.250"/></svg>
<span class="ui bm" style="left:1067px">AM</span>
<svg style="left:1098px;top:116px" width="16" height="16" viewBox="0 0 16 16" ><defs><linearGradient id="cg14" x1="0" y1="0" x2="0" y2="1"><stop offset="0" stop-color="#3f7fc6"/><stop offset=".45" stop-color="#1a5aa6"/><stop offset="1" stop-color="#0c4a90"/></linearGradient></defs><rect width="16" height="16" fill="url(#cg14)"/><rect x=".5" y=".5" width="15" height="15" fill="none" stroke="#0d4b92" stroke-width="1"/><path d="M2 13.400V11.300L6 7.500 8.500 9.800 14 4.800V13.400z" fill="#f6f6f6"/><path d="M4.800 10.500v2.900M7.300 10.500v2.900M10 10.500v2.900M12.300 10.500v2.900" stroke="#dcdcdc" stroke-width=".9"/><path d="M2 9.200L6 5.400 8.500 7.600 14 2.600" fill="none" stroke="#d8404f" stroke-width="1.250"/></svg>
<span class="ui bm" style="left:1118px">ES</span>
<svg style="left:1142px;top:116px" width="16" height="16" viewBox="0 0 16 16" ><defs><linearGradient id="cg15" x1="0" y1="0" x2="0" y2="1"><stop offset="0" stop-color="#3f7fc6"/><stop offset=".45" stop-color="#1a5aa6"/><stop offset="1" stop-color="#0c4a90"/></linearGradient></defs><rect width="16" height="16" fill="url(#cg15)"/><rect x=".5" y=".5" width="15" height="15" fill="none" stroke="#0d4b92" stroke-width="1"/><path d="M2 13.400V11.300L6 7.500 8.500 9.800 14 4.800V13.400z" fill="#f6f6f6"/><path d="M4.800 10.500v2.900M7.300 10.500v2.900M10 10.500v2.900M12.300 10.500v2.900" stroke="#dcdcdc" stroke-width=".9"/><path d="M2 9.200L6 5.400 8.500 7.600 14 2.600" fill="none" stroke="#d8404f" stroke-width="1.250"/></svg>
<span class="ui bm" style="left:1162px">FP</span>
<svg style="left:1187px;top:116px" width="16" height="16" viewBox="0 0 16 16" ><defs><linearGradient id="cg16" x1="0" y1="0" x2="0" y2="1"><stop offset="0" stop-color="#3f7fc6"/><stop offset=".45" stop-color="#1a5aa6"/><stop offset="1" stop-color="#0c4a90"/></linearGradient></defs><rect width="16" height="16" fill="url(#cg16)"/><rect x=".5" y=".5" width="15" height="15" fill="none" stroke="#0d4b92" stroke-width="1"/><path d="M2 13.400V11.300L6 7.500 8.500 9.800 14 4.800V13.400z" fill="#f6f6f6"/><path d="M4.800 10.500v2.900M7.300 10.500v2.900M10 10.500v2.900M12.300 10.500v2.900" stroke="#dcdcdc" stroke-width=".9"/><path d="M2 9.200L6 5.400 8.500 7.600 14 2.600" fill="none" stroke="#d8404f" stroke-width="1.250"/></svg>
<span class="ui bm" style="left:1207px">SF</span>
<svg style="left:1231px;top:116px" width="16" height="16" viewBox="0 0 16 16" ><defs><linearGradient id="cg17" x1="0" y1="0" x2="0" y2="1"><stop offset="0" stop-color="#3f7fc6"/><stop offset=".45" stop-color="#1a5aa6"/><stop offset="1" stop-color="#0c4a90"/></linearGradient></defs><rect width="16" height="16" fill="url(#cg17)"/><rect x=".5" y=".5" width="15" height="15" fill="none" stroke="#0d4b92" stroke-width="1"/><path d="M2 13.400V11.300L6 7.500 8.500 9.800 14 4.800V13.400z" fill="#f6f6f6"/><path d="M4.800 10.500v2.900M7.300 10.500v2.900M10 10.500v2.900M12.300 10.500v2.900" stroke="#dcdcdc" stroke-width=".9"/><path d="M2 9.200L6 5.400 8.500 7.600 14 2.600" fill="none" stroke="#d8404f" stroke-width="1.250"/></svg>
<span class="ui bm" style="left:1251px">AMD</span>
<svg style="left:1290px;top:116px" width="16" height="16" viewBox="0 0 16 16" ><defs><linearGradient id="cg18" x1="0" y1="0" x2="0" y2="1"><stop offset="0" stop-color="#3f7fc6"/><stop offset=".45" stop-color="#1a5aa6"/><stop offset="1" stop-color="#0c4a90"/></linearGradient></defs><rect width="16" height="16" fill="url(#cg18)"/><rect x=".5" y=".5" width="15" height="15" fill="none" stroke="#0d4b92" stroke-width="1"/><path d="M2 13.400V11.300L6 7.500 8.500 9.800 14 4.800V13.400z" fill="#f6f6f6"/><path d="M4.800 10.500v2.900M7.300 10.500v2.900M10 10.500v2.900M12.300 10.500v2.900" stroke="#dcdcdc" stroke-width=".9"/><path d="M2 9.200L6 5.400 8.500 7.600 14 2.600" fill="none" stroke="#d8404f" stroke-width="1.250"/></svg>
<span class="ui bm" style="left:1310px">SAP</span>
<svg style="left:1346px;top:116px" width="16" height="16" viewBox="0 0 16 16" ><defs><linearGradient id="cg19" x1="0" y1="0" x2="0" y2="1"><stop offset="0" stop-color="#3f7fc6"/><stop offset=".45" stop-color="#1a5aa6"/><stop offset="1" stop-color="#0c4a90"/></linearGradient></defs><rect width="16" height="16" fill="url(#cg19)"/><rect x=".5" y=".5" width="15" height="15" fill="none" stroke="#0d4b92" stroke-width="1"/><path d="M2 13.400V11.300L6 7.500 8.500 9.800 14 4.800V13.400z" fill="#f6f6f6"/><path d="M4.800 10.500v2.900M7.300 10.500v2.900M10 10.500v2.900M12.300 10.500v2.900" stroke="#dcdcdc" stroke-width=".9"/><path d="M2 9.200L6 5.400 8.500 7.600 14 2.600" fill="none" stroke="#d8404f" stroke-width="1.250"/></svg>
<span class="ui bm" style="left:1366px">EY</span>
<svg style="left:1434px;top:118px" width="14" height="12" viewBox="0 0 14 12" ><path d="M.8 .8l5.200 5.200L.8 11.200M7.300 .8l5.200 5.200-5.200 5.200" fill="none" stroke="#5b5b66" stroke-width="1.300"/></svg>
<svg style="left:1461px;top:116px" width="16" height="16" viewBox="0 0 16 16" ><path d="M1.700 3.700a1.200 1.200 0 0 1 1.200-1.200h3.200l1.700 1.900h5.400a1.200 1.200 0 0 1 1.200 1.200v6.700a1.200 1.200 0 0 1-1.200 1.200H2.900a1.200 1.200 0 0 1-1.200-1.200z" fill="none" stroke="#3a3944" stroke-width="1.200"/></svg>
<span class="ui bm" style="left:1480.5px;letter-spacing:-0.024px">Weitere Lesezeichen</span>
<div id="view">
<div id="page"></div>
<div id="content">
<div class="h2" style="left:220px;top:180px">Gold</div>
<div class="row dk" style="left:220px;top:204px;height:36px"><span class="c1 b" style=";letter-spacing:0.337px">Artikelbezeichnung</span><span class="c2 b" style=";letter-spacing:0.544px">Ankaufswert</span><span class="c3 b" style=";letter-spacing:0.393px">Verkaufspreis</span></div>
<div class="row lt" style="left:220px;top:240px;height:35px"><span class="c1" style=";letter-spacing:0.219px">Känguru 1 Unze Gold</span><span class="c2 n">3.608,57 €</span><span class="c3 n">3.873,20 €</span><a class="c4" style=";letter-spacing:0.464px">Detail</a></div>
<div class="row dk" style="left:220px;top:275px;height:35px"><span class="c1" style=";letter-spacing:0.276px">Krügerrand 1 Unze Gold</span><span class="c2 n">3.608,57 €</span><span class="c3 n">3.823,20 €</span><a class="c4" style=";letter-spacing:0.464px">Detail</a></div>
<div class="row lt" style="left:220px;top:310px;height:35px"><span class="c1" style=";letter-spacing:0.180px">Maple Leaf 1 Unze Gold</span><span class="c2 n">3.608,57 €</span><span class="c3 n">3.838,20 €</span><a class="c4" style=";letter-spacing:0.464px">Detail</a></div>
<div class="row dk" style="left:220px;top:345px;height:35px"><span class="c1" style=";letter-spacing:0.299px">Britannia 1 Unze Gold</span><span class="c2 n">3.608,57 €</span><span class="c3 n">3.853,20 €</span><a class="c4" style=";letter-spacing:0.464px">Detail</a></div>
<div class="row lt" style="left:220px;top:380px;height:35px"><span class="c1" style=";letter-spacing:0.374px">Philharmoniker 1 Unze Gold</span><span class="c2 n">3.608,57 €</span><span class="c3 n">3.891,20 €</span><a class="c4" style=";letter-spacing:0.464px">Detail</a></div>
<div class="row dk" style="left:220px;top:415px;height:35px"><span class="c1" style=";letter-spacing:0.156px">Vreneli 20 Franken Gold CH</span><span class="c2 n">679,94 €</span><span class="c3 n">731,99 €</span><a class="c4" style=";letter-spacing:0.464px">Detail</a></div>
<div class="row lt" style="left:220px;top:450px;height:35px"><span class="c1" style=";letter-spacing:0.245px">20 Mark Kaiserreich Gold D</span><span class="c2 n">832,69 €</span><span class="c3 n">898,50 €</span><a class="c4" style=";letter-spacing:0.464px">Detail</a></div>
<div class="row dk" style="left:220px;top:485px;height:35px"><span class="c1" style=";letter-spacing:0.244px">Sovereign 1 Goldpfund UK</span><span class="c2 n">849,25 €</span><span class="c3 n">912,91 €</span><a class="c4" style=";letter-spacing:0.464px">Detail</a></div>
<div class="row lt" style="left:220px;top:520px;height:35px"><span class="c1" style=";letter-spacing:0.312px">Krügerrand 1/10 Unze Gold</span><span class="c2 n">364,54 €</span><span class="c3 n">413,04 €</span><a class="c4" style=";letter-spacing:0.464px">Detail</a></div>
<div class="row dk" style="left:220px;top:555px;height:35px"><span class="c1" style=";letter-spacing:0.364px">Krügerrand 1/4 Unze Goldmünze</span><span class="c2 n">902,14 €</span><span class="c3 n">1.008,20 €</span><a class="c4" style=";letter-spacing:0.464px">Detail</a></div>
<div class="row lt" style="left:220px;top:590px;height:35px"><span class="c1" style=";letter-spacing:0.364px">Krügerrand 1/2 Unze Goldmünze</span><span class="c2 n">1.804,28 €</span><span class="c3 n">1.973,16 €</span><a class="c4" style=";letter-spacing:0.464px">Detail</a></div>
<div class="row dk" style="left:220px;top:625px;height:35px"><span class="c1" style=";letter-spacing:0.228px">Kontogold - Tresorgold - 1 Oz</span><span class="c2 n">3.626,98 €</span><span class="c3 n">3.737,45 €</span><a class="c4" style=";letter-spacing:0.464px">Detail</a></div>
<div class="row lt" style="left:220px;top:660px;height:35px"><span class="c1" style=";letter-spacing:0.285px">1 Unze Goldbarren Heraeus</span><span class="c2 n">3.608,57 €</span><span class="c3 n">3.805,21 €</span><a class="c4" style=";letter-spacing:0.464px">Detail</a></div>
<div class="row dk" style="left:220px;top:695px;height:35px"><span class="c1" style=";letter-spacing:0.362px">10 Gramm Goldbarren Heraeus</span><span class="c2 n">1.173,86 €</span><span class="c3 n">1.259,37 €</span><a class="c4" style=";letter-spacing:0.464px">Detail</a></div>
<div class="row lt" style="left:220px;top:730px;height:35px"><span class="c1" style=";letter-spacing:0.363px">100 Gramm Goldbarren Heraeus</span><span class="c2 n">11.601,80 €</span><span class="c3 n">12.353,73 €</span><a class="c4" style=";letter-spacing:0.464px">Detail</a></div>
<div class="row dk" style="left:220px;top:765px;height:43px"><span class="c1" style=";letter-spacing:0.263px">1000g Goldbarren 1 Kilo</span><span class="c1 l2" style=";letter-spacing:0.188px">C.Hafner</span><span class="c2 n">116.018,05 €</span><span class="c3 n">123.237,34 €</span><a class="c4" style=";letter-spacing:0.464px">Detail</a></div>
<div class="h2" style="left:805px;top:180px">Silber</div>
<div class="row dk" style="left:805px;top:204px;height:36px"><span class="c1 b" style=";letter-spacing:0.337px">Artikelbezeichnung</span><span class="c2 b" style=";letter-spacing:0.544px">Ankaufswert</span><span class="c3 b" style=";letter-spacing:0.393px">Verkaufspreis</span></div>
<div class="row lt" style="left:805px;top:240px;height:35px"><span class="c1" style=";letter-spacing:0.165px">Kangaroo Silber 1 Unze</span><span class="c2 n">60,50 €</span><span class="c3 n">73,29 €</span><a class="c4" style=";letter-spacing:0.464px">Detail</a></div>
<div class="row dk" style="left:805px;top:275px;height:35px"><span class="c1" style=";letter-spacing:0.270px">Krügerrand Silber 1 Unze</span><span class="c2 n">60,50 €</span><span class="c3 n">79,09 €</span><a class="c4" style=";letter-spacing:0.464px">Detail</a></div>
<div class="row lt" style="left:805px;top:310px;height:35px"><span class="c1" style=";letter-spacing:0.160px">Maple Leaf Silber 1 Unze</span><span class="c2 n">60,50 €</span><span class="c3 n">73,29 €</span><a class="c4" style=";letter-spacing:0.464px">Detail</a></div>
<div class="row dk" style="left:805px;top:345px;height:35px"><span class="c1" style=";letter-spacing:0.277px">Britannia Silber 1 Unze</span><span class="c2 n">60,50 €</span><span class="c3 n">79,09 €</span><a class="c4" style=";letter-spacing:0.464px">Detail</a></div>
<div class="row lt" style="left:805px;top:380px;height:35px"><span class="c1" style=";letter-spacing:0.347px">Philharmoniker Silber 1 Unze</span><span class="c2 n">60,50 €</span><span class="c3 n">73,29 €</span><a class="c4" style=";letter-spacing:0.464px">Detail</a></div>
<div class="row dk" style="left:805px;top:415px;height:35px"><span class="c1" style=";letter-spacing:0.212px">Koala 1 Kilo Silbermünze</span><span class="c2 n">1.868,53 €</span><span class="c3 n">2.497,26 €</span><a class="c4" style=";letter-spacing:0.464px">Detail</a></div>
<div class="row lt" style="left:805px;top:450px;height:35px"><span class="c1" style=";letter-spacing:0.333px">Kookaburra 1 Kilo Silbermünze</span><span class="c2 n">1.868,53 €</span><span class="c3 n">2.371,26 €</span><a class="c4" style=";letter-spacing:0.464px">Detail</a></div>
<div class="row dk" style="left:805px;top:485px;height:35px"><span class="c1" style=";letter-spacing:0.306px">Kontosilber - Tresorsilber 1 Oz</span><span class="c2 n">57,43 €</span><span class="c3 n">60,17 €</span><a class="c4" style=";letter-spacing:0.464px">Detail</a></div>
<div class="row lt" style="left:805px;top:520px;height:43px"><span class="c1" style=";letter-spacing:0.408px">100 Gramm Tafelbarren Silber</span><span class="c1 l2" style=";letter-spacing:0.057px">(100 x 1g teilbar) VALCAMBI</span><span class="c2 n">225,85 €</span><span class="c3 n">290,02 €</span><a class="c4" style=";letter-spacing:0.464px">Detail</a></div>
<div class="row dk" style="left:805px;top:563px;height:35px"><span class="c1" style=";letter-spacing:0.394px">250 Gramm Silberbarren</span><span class="c2 n">459,62 €</span><span class="c3 n">665,88 €</span><a class="c4" style=";letter-spacing:0.464px">Detail</a></div>
<div class="row lt" style="left:805px;top:598px;height:35px"><span class="c1" style=";letter-spacing:0.390px">500 Gramm Silber Münzbarren</span><span class="c2 n">934,24 €</span><span class="c3 n">1.328,19 €</span><a class="c4" style=";letter-spacing:0.464px">Detail</a></div>
<div class="row dk" style="left:805px;top:633px;height:43px"><span class="c1" style=";letter-spacing:0.383px">1000 Gramm Silber Münzbarren</span><span class="c1 l2" style=";letter-spacing:0.249px">diverse Hersteller (LBMA)</span><span class="c2 n">1.908,53 €</span><span class="c3 n">2.531,43 €</span><a class="c4" style=";letter-spacing:0.464px">Detail</a></div>
<div class="row lt" style="left:805px;top:676px;height:35px"><span class="c1" style=";letter-spacing:0.311px">1000 Gramm Silberbarren LBMA</span><span class="c2 n">1.848,53 €</span><span class="c3 n">2.489,84 €</span><a class="c4" style=";letter-spacing:0.464px">Detail</a></div>
<div class="row dk" style="left:805px;top:711px;height:35px"><span class="c1" style=";letter-spacing:0.300px">1 Kilo Silberbarren Heraeus</span><span class="c2 n">1.848,53 €</span><span class="c3 n">2.521,97 €</span><a class="c4" style=";letter-spacing:0.464px">Detail</a></div>
<div class="row lt" style="left:805px;top:746px;height:35px"><span class="c1" style=";letter-spacing:0.383px">5000 Gramm Silber Münzbarren</span><span class="c2 n">8.842,64 €</span><span class="c3 n">12.096,28 €</span><a class="c4" style=";letter-spacing:0.464px">Detail</a></div>
<div id="sb"></div>
</div>
</div>
<div id="taskbar">
<svg style="left:21px;top:13px" width="23" height="23" viewBox="0 0 23 23" ><defs><linearGradient id="wl" x1="0" y1="0" x2="1" y2="1"><stop offset="0" stop-color="#4cc2f5"/><stop offset="1" stop-color="#0a6ad4"/></linearGradient></defs><g fill="url(#wl)"><rect x="0" y="0" width="11" height="11" rx=".8"/><rect x="12" y="0" width="11" height="11" rx=".8"/><rect x="0" y="12" width="11" height="11" rx=".8"/><rect x="12" y="12" width="11" height="11" rx=".8"/></g></svg>
<div id="search"></div>
<svg style="left:69px;top:17px" width="15" height="15" viewBox="0 0 15 15" ><circle cx="5.900" cy="5.900" r="4.800" fill="none" stroke="#222" stroke-width="1.600"/><path d="M9.400 9.400l4 4" stroke="#222" stroke-width="1.800" stroke-linecap="round"/></svg>
<span class="tb" style="left:93px;top:16px;font-size:13.700px;line-height:18px;color:#5f5f5f;letter-spacing:-0.203px">Suche</span>
<svg style="left:289px;top:13px" width="24" height="22" viewBox="0 0 24 22" ><defs><linearGradient id="tv" x1="0" y1="0" x2="1" y2="1"><stop offset="0" stop-color="#c9c9c9"/><stop offset="1" stop-color="#8d8d8d"/></linearGradient></defs><rect x="5.800" y=".3" width="17.700" height="15.200" rx="1.500" fill="#fafafa" stroke="#e2e2e2" stroke-width=".6"/><rect x="0" y="6.300" width="17.800" height="15.400" rx="1.500" fill="#1f1f1f"/><path d="M5.800 6.300h12v7.700a1.500 1.500 0 0 1-1.500 1.500H5.800z" fill="url(#tv)"/></svg>
<div class="abs" style="left:325.800px;top:5px;width:38.200px;height:38.300px;border-radius:4.500px;background:#f0f2f0;box-shadow:inset 0 0 0 1px #f4f6f4"></div>
<svg style="left:333.5px;top:11.7px" width="22.5" height="23.4" viewBox="0 0 22.5 23.4" ><defs><linearGradient id="fx" x1=".8" y1=".05" x2=".3" y2="1"><stop offset="0" stop-color="#fff148"/><stop offset=".3" stop-color="#ffbd2e"/><stop offset=".55" stop-color="#ff7a26"/><stop offset=".8" stop-color="#ff3647"/><stop offset="1" stop-color="#e8148a"/></linearGradient><linearGradient id="fx2" x1=".5" y1="0" x2=".4" y2="1"><stop offset="0" stop-color="#c73bea"/><stop offset=".5" stop-color="#8a4af0"/><stop offset="1" stop-color="#5534c4"/></linearGradient><linearGradient id="fx3" x1="0" y1="0" x2="1" y2="1"><stop offset="0" stop-color="#ffb02e"/><stop offset="1" stop-color="#ff5a2c"/></linearGradient></defs><path d="M14.600.3C16 2 19 3.500 20.200 5.600 21.800 8 22.500 10.300 22.500 12.700 22.500 18.600 17.500 23.300 11.200 23.300 5 23.300 0 18.600 0 12.700 0 9.500 1 6.500 2.800 4.200 3 5.200 3.600 6 4.500 6.500 4.800 5.600 5.400 4.900 6.200 4.500 6.300 5.600 6.900 6.500 7.600 7 8.800 6.200 9.800 6 10.700 5.900 10.800 4 11.800 2.400 12.900 1.400 13.500 1 14 .6 14.600.3z" fill="url(#fx)"/><circle cx="11.600" cy="12.400" r="4.700" fill="url(#fx2)"/><path d="M3.200 10.200C5.500 8.300 8.800 8 11 9.300 12 8.700 13.200 8.600 14.300 9.100 13 9.600 12.300 10.400 12.100 11.200 11 10.600 9.500 10.900 8.500 12 7.600 13.200 7.600 14.800 8.300 16.300 5.500 15.500 3.500 13.200 3.200 10.200z" fill="url(#fx3)"/><path d="M16.300 11.500C17 14.500 15 17.300 12 17.600 9.500 17.800 7.800 16.500 7.200 15 9 16.600 12.500 16.500 14.300 14.500 15.200 13.600 15.800 12.600 16.300 11.500z" fill="#ff8a2a" opacity=".85"/></svg>
<div class="abs" style="left:337.200px;top:40px;width:15.700px;height:3px;border-radius:1.500px;background:#0a6cd6"></div>
<svg style="left:377px;top:12px" width="24" height="24" viewBox="0 0 24 24" ><rect width="24" height="24" fill="#fff"/><path d="M1.200 3.200C3 3.300 12 6.300 21.600 10.300 22.200 13 22 17.500 21.200 20.600 19 20 17.200 19.200 15.600 18l2.800.3C15.500 16.500 12.800 15.800 11 15.300l4 .2C12.500 13.600 9.800 12.400 7.500 11l5.300.8C8 9 3.500 6 1.200 3.200z" fill="#d9dadc"/><path d="M2 3.800C8 6.500 14 8.500 21 11M8.500 11.300C12.500 12.500 16 13.300 20.500 13.600M11.500 15.300C14.500 16.300 17.500 16.800 20.800 16.800M16 18.200C18 19 19.500 19.500 21 19.900" stroke="#9b9ea3" stroke-width=".7" fill="none"/></svg>
<div class="abs" style="left:386px;top:40.200px;width:6px;height:2.500px;border-radius:1.300px;background:#7c7c7c"></div>
<svg style="left:421px;top:12px" width="24" height="24" viewBox="0 0 24 24" ><rect width="24" height="24" rx="4" fill="#0d1b5c"/><path d="M12 0h8a4 4 0 0 1 4 4v8H12z" fill="#0a6cf0"/><text x="11.500" y="19.500" text-anchor="middle" font-family="Liberation Sans,sans-serif" font-weight="bold" font-size="20" fill="#fff">a</text></svg>
<div class="abs" style="left:430px;top:40.200px;width:6px;height:2.500px;border-radius:1.300px;background:#7c7c7c"></div>
<svg style="left:464px;top:13px" width="26" height="23" viewBox="0 0 26 23" ><path d="M1 3a1.500 1.500 0 0 1 1.500-1.500H9l2.500 2.500H23a1.500 1.500 0 0 1 1.500 1.500V8H1z" fill="#e9a91d"/><rect x="1" y="5.500" width="23.500" height="16.500" rx="1.500" fill="#fbd04e"/><path d="M1 19h23.500v1.500a1.500 1.500 0 0 1-1.500 1.500H2.500A1.500 1.500 0 0 1 1 20.500z" fill="#e3a31a"/><rect x="8" y="15.500" width="10" height="6.500" rx="1" fill="#2f8fe8"/></svg>
<svg style="left:508px;top:12px" width="25" height="24" viewBox="0 0 25 24" ><path d="M12 1.500C5.500 1.500 1 6 1 12s4.500 10.500 9.500 10.500c2 0 2.800-1.300 2.300-2.800-.6-1.800.3-3.200 2.400-3.200H19c3 0 4.500-2 4.500-4.800C23.500 5.500 18.500 1.500 12 1.500z" fill="#3aa7e0"/><circle cx="7" cy="8" r="2" fill="#f4c63a"/><circle cx="12" cy="5.500" r="2" fill="#5fcf6b"/><circle cx="5.500" cy="13.500" r="2" fill="#f06a4a"/><circle cx="8.500" cy="18.500" r="1.800" fill="#fff"/><path d="M21 1l2 1.500L15.500 14l-2.500 1.200.6-2.700z" fill="#c98a3c"/><path d="M13 15.200l2.500-1.200-1.900-1.500z" fill="#444"/></svg>
<svg style="left:1218px;top:14px" width="24" height="22" viewBox="0 0 24 22" ><defs><linearGradient id="cl" x1="0" y1="0" x2="0" y2="1"><stop offset="0" stop-color="#e6eefc"/><stop offset="1" stop-color="#a9c3f0"/></linearGradient><radialGradient id="sn"><stop offset="0" stop-color="#ffb43a"/><stop offset="1" stop-color="#ffb43a" stop-opacity="0"/></radialGradient></defs><circle cx="20" cy="6" r="5" fill="url(#sn)"/><path d="M5 19.500h14.500a4.300 4.300 0 0 0 .6-8.550 6.300 6.300 0 0 0-12-1.300A5 5 0 0 0 5 19.500z" fill="url(#cl)" stroke="#9db7e6" stroke-width=".5"/></svg>
<div class="abs" style="left:1229px;top:5px;width:16px;height:16px;border-radius:8px;background:#c42b1c;color:#fff;font:bold 11px/16px 'Liberation Sans',sans-serif;text-align:center">3</div>
<span class="tb" style="left:1249px;top:8px;font-size:11.700px;letter-spacing:-0.162px">5°C</span>
<span class="tb" style="left:1249px;top:24px;font-size:11.700px;color:#5c5c5c;letter-spacing:0.370px">Stark bewölkt</span>
<svg style="left:1381px;top:20px" width="12" height="9" viewBox="0 0 12 9" ><path d="M1 7l5-5 5 5" fill="none" stroke="#222" stroke-width="1.400"/></svg>
<svg style="left:1410px;top:15px" width="18" height="18" viewBox="0 0 18 18" ><defs><linearGradient id="ocl" x1="0" y1="0" x2="1" y2="0"><stop offset="0" stop-color="#9a9a9a"/><stop offset=".6" stop-color="#e4e4e4"/><stop offset="1" stop-color="#e8e8e8"/></linearGradient></defs><path d="M5 14.500h8.500a3.200 3.200 0 0 0 .6-6.300 4.600 4.600 0 0 0-8.800-.9A3.700 3.700 0 0 0 5 14.500z" fill="url(#ocl)" stroke="#222" stroke-width="1.200"/><path d="M1.800 2l14.700 14" stroke="#222" stroke-width="1.300"/></svg>
<svg style="left:1443px;top:15px" width="16" height="16" viewBox="0 0 16 16" ><g fill="none" stroke="#222" stroke-width="1.300" stroke-linecap="round"><path d="M1 6.500a10 10 0 0 1 14 0"/><path d="M3.300 9a6.800 6.800 0 0 1 9.400 0"/><path d="M5.600 11.400a3.500 3.500 0 0 1 4.800 0"/></g><circle cx="8" cy="13.600" r="1.200" fill="#222"/></svg>
<svg style="left:1467px;top:16.5px" width="16" height="16" viewBox="0 0 16 16" ><path d="M1 5.500h2.300L6.500 2.600v9.800L3.300 9.500H1z" fill="none" stroke="#222" stroke-width="1.200" stroke-linejoin="round"/><g fill="none" stroke="#222" stroke-width="1.100" stroke-linecap="round"><path d="M8.700 5.400a3 3 0 0 1 0 4.200"/><path d="M10.500 3.600a5.500 5.500 0 0 1 0 7.800" opacity=".85"/><path d="M12.500 2a8 8 0 0 1 0 11" opacity=".3"/></g></svg>
<svg style="left:1490.3px;top:15.8px" width="18" height="16" viewBox="0 0 18 16" ><rect x="1.200" y="4.400" width="13.300" height="8.200" rx="1.800" fill="none" stroke="#222" stroke-width="1.200"/><path d="M3.400 6.500h8.300a.8.800 0 0 1 .8.800v2.400a.8.800 0 0 1-.8.800H2.900z" fill="#222"/><rect x="14.900" y="6.800" width="1.500" height="3.400" rx=".7" fill="#222"/><path d="M3.400 1L1.500 4.200h1.800L1.800 7.300" fill="none" stroke="#222" stroke-width="1.100" stroke-linejoin="round"/><path d="M0 3.500h3.500v2H0z" fill="#e8e8e7" opacity="0"/></svg>
<span class="tb" style="left:1551.5px;top:8px;font-size:11.700px;letter-spacing:0.302px">11:20</span>
<span class="tb" style="left:1523px;top:24px;font-size:11.700px;letter-spacing:-0.011px">12.12.2025</span>
</div>
</body></html>
